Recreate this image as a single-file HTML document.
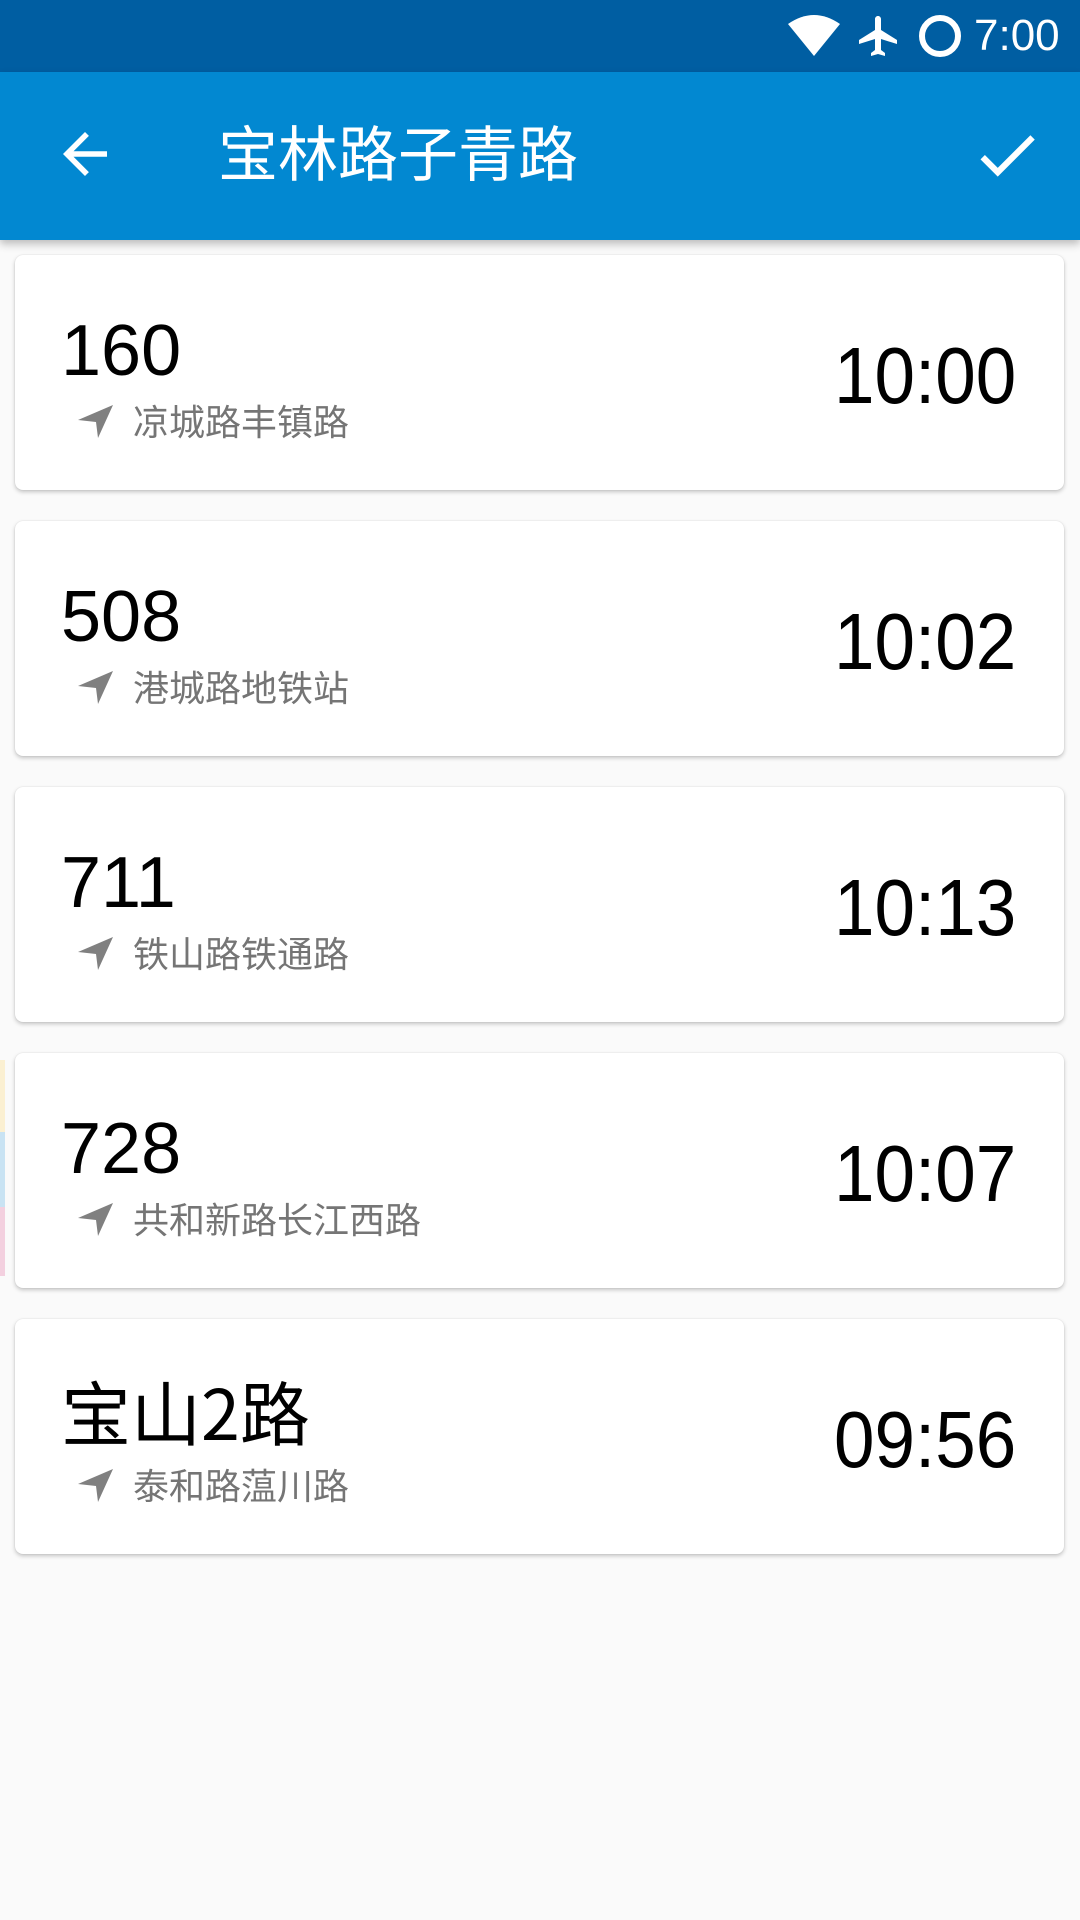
<!DOCTYPE html>
<html><head><meta charset="utf-8">
<style>
*{margin:0;padding:0;box-sizing:border-box}
body{width:1080px;height:1920px;background:#fafafa;font-family:"Liberation Sans","Noto Sans CJK SC",sans-serif;position:relative;overflow:hidden}
.sb{position:absolute;left:0;top:0;width:1080px;height:72px;background:#005ea2}
.tb{position:absolute;left:0;top:72px;width:1080px;height:168px;background:#0288d1;box-shadow:0 4px 8px rgba(0,0,0,.25)}
.title{position:absolute;left:218px;top:44px;color:#fff;font-size:60px;line-height:70px;font-family:"Noto Sans CJK SC",sans-serif}
.card{position:absolute;left:15px;width:1049px;height:235px;background:#fff;border-radius:8px;box-shadow:0 2px 4px rgba(0,0,0,.22),0 0 1px rgba(0,0,0,.15)}
.num{position:absolute;left:46px;top:56px;font-size:72px;line-height:80px;color:#000}
.sub{position:absolute;left:118px;top:143px;font-size:36px;line-height:44px;color:#757575;font-family:"Noto Sans CJK SC",sans-serif}
.nav{position:absolute;left:61px;top:147px}
.time{position:absolute;right:48px;top:76px;font-size:80px;line-height:90px;color:#000;transform:scaleX(0.91);transform-origin:right center}
.strip{position:absolute;left:0;width:5px}
</style></head><body>
<div class="sb">
<svg style="position:absolute;left:786px;top:14px" width="56" height="44" viewBox="0 0 56 44"><path d="M2 10 Q28 -8 54 10 L28 42 Z" fill="#fff"/></svg>
<svg style="position:absolute;left:855px;top:12px" width="48" height="48" viewBox="0 0 24 24"><path d="M21 16v-2l-8-5V3.5c0-.83-.67-1.5-1.5-1.5S10 2.67 10 3.5V9l-8 5v2l8-2.5V19l-2 1.5V22l3.5-1 3.5 1v-1.5L13 19v-5.5l8 2.5z" fill="#fff"/></svg>
<svg style="position:absolute;left:916px;top:12px" width="48" height="48" viewBox="0 0 48 48"><circle cx="24" cy="24" r="18" fill="none" stroke="#fff" stroke-width="6"/></svg>
<div style="position:absolute;left:974px;top:10px;color:#fff;font-size:44px;line-height:52px">7:00</div>
</div>
<div class="tb">
<svg style="position:absolute;left:52px;top:49px" width="66" height="66" viewBox="0 0 24 24"><path d="M20 11H7.83l5.59-5.59L12 4l-8 8 8 8 1.41-1.41L7.83 13H20v-2z" fill="#fff"/></svg>
<div class="title">宝林路子青路</div>
<svg style="position:absolute;left:970px;top:46px" width="74" height="74" viewBox="0 0 24 24"><path d="M9 16.17L4.83 12l-1.42 1.41L9 19 21 7l-1.41-1.41z" fill="#fff"/></svg>
</div>
<div class="strip" style="top:1060px;height:72px;background:#fbf0d2"></div>
<div class="strip" style="top:1132px;height:75px;background:#c9e3f3"></div>
<div class="strip" style="top:1207px;height:69px;background:#f3d0df"></div>

<div class="card" style="top:255px"><div class="num">160</div><svg class="nav" width="40" height="40" viewBox="0 0 40 40"><path d="M37 3 L2 18 L20 20 L22 36 Z" fill="#808080"/></svg><div class="sub">凉城路丰镇路</div><div class="time">10:00</div></div>
<div class="card" style="top:521px"><div class="num">508</div><svg class="nav" width="40" height="40" viewBox="0 0 40 40"><path d="M37 3 L2 18 L20 20 L22 36 Z" fill="#808080"/></svg><div class="sub">港城路地铁站</div><div class="time">10:02</div></div>
<div class="card" style="top:787px"><div class="num">711</div><svg class="nav" width="40" height="40" viewBox="0 0 40 40"><path d="M37 3 L2 18 L20 20 L22 36 Z" fill="#808080"/></svg><div class="sub">铁山路铁通路</div><div class="time">10:13</div></div>
<div class="card" style="top:1053px"><div class="num">728</div><svg class="nav" width="40" height="40" viewBox="0 0 40 40"><path d="M37 3 L2 18 L20 20 L22 36 Z" fill="#808080"/></svg><div class="sub">共和新路长江西路</div><div class="time">10:07</div></div>
<div class="card" style="top:1319px"><div class="num" style="font-family:'Noto Sans CJK SC',sans-serif;font-size:70px;top:52px">宝山2路</div><svg class="nav" width="40" height="40" viewBox="0 0 40 40"><path d="M37 3 L2 18 L20 20 L22 36 Z" fill="#808080"/></svg><div class="sub">泰和路蕰川路</div><div class="time">09:56</div></div>
</body></html>
